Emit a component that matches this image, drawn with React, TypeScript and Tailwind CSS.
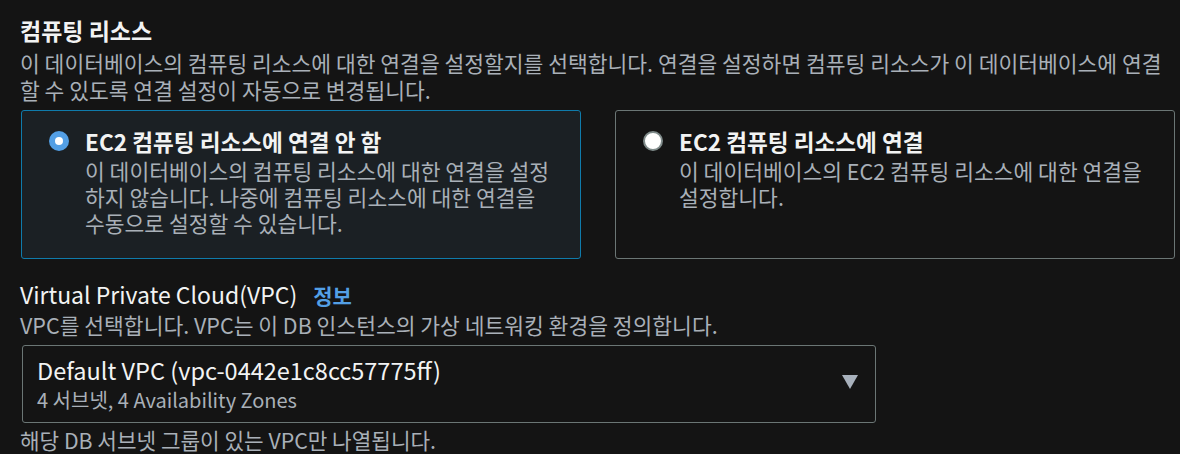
export default function App() {
  return (
    <div className="w-[1180px] h-[454px] overflow-hidden bg-[#141414] pl-[20px] pr-[6px] pt-[15px] font-['Noto_Sans_CJK_KR',sans-serif] text-[#f2f3f3]">
      {/* 컴퓨팅 리소스 */}
      <h2 className="text-[23px] leading-[30px] font-bold">컴퓨팅 리소스</h2>
      <p className="mt-[4px] text-[21.5px] leading-[27px] text-[#a9b0b8]">
        이 데이터베이스의 컴퓨팅 리소스에 대한 연결을 설정할지를 선택합니다. 연결을 설정하면 컴퓨팅 리소스가 이 데이터베이스에 연결할 수 있도록 연결 설정이 자동으로 변경됩니다.
      </p>

      <div className="mt-[7px] grid grid-cols-[560px_560px] gap-[34px] pl-[1px]">
        <div className="flex items-start rounded-[3px] border border-[#0f7bab] bg-[#1b2024] pl-[27px] pr-[24px] pt-[16px] pb-[22px]">
          <span className="mt-[4px] flex h-[20px] w-[20px] shrink-0 items-center justify-center rounded-full bg-[#539fe5]">
            <span className="h-[8px] w-[8px] rounded-full bg-white" />
          </span>
          <div className="ml-[16px]">
            <div className="text-[22.6px] leading-[30px] font-bold">EC2 컴퓨팅 리소스에 연결 안 함</div>
            <p className="mt-[1px] text-[21.5px] leading-[26px] text-[#a9b0b8]">
              이 데이터베이스의 컴퓨팅 리소스에 대한 연결을 설정하지 않습니다. 나중에 컴퓨팅 리소스에 대한 연결을 수동으로 설정할 수 있습니다.
            </p>
          </div>
        </div>

        <div className="flex items-start rounded-[3px] border border-[#6b7675] bg-[#141414] pl-[27px] pr-[24px] pt-[16px] pb-[22px]">
          <span className="mt-[4px] h-[20px] w-[20px] shrink-0 rounded-full border-2 border-[#7f8b8a] bg-white" />
          <div className="ml-[16px]">
            <div className="text-[22.6px] leading-[30px] font-bold">EC2 컴퓨팅 리소스에 연결</div>
            <p className="mt-[1px] text-[21.5px] leading-[26px] text-[#a9b0b8]">
              이 데이터베이스의 EC2 컴퓨팅 리소스에 대한 연결을 설정합니다.
            </p>
          </div>
        </div>
      </div>

      {/* VPC */}
      <div className="mt-[20px] flex items-baseline gap-[16px]">
        <span className="text-[23px] leading-[30px]">Virtual Private Cloud(VPC)</span>
        <span className="text-[21px] leading-[30px] font-bold text-[#539fe5]">정보</span>
      </div>
      <p className="mt-[1px] text-[21.5px] leading-[27px] text-[#a9b0b8]">
        VPC를 선택합니다. VPC는 이 DB 인스턴스의 가상 네트워킹 환경을 정의합니다.
      </p>

      <div className="mt-[7px] ml-[2px] flex h-[78px] w-[854px] items-center rounded-[3px] border border-[#6b7675] pl-[14px] pr-[17px]">
        <div className="flex-1">
          <div className="text-[23.5px] leading-[30px]">Default VPC (vpc-0442e1c8cc57775ff)</div>
          <div className="mt-[2px] text-[20px] leading-[26px] text-[#a9b0b8]">4 서브넷, 4 Availability Zones</div>
        </div>
        <svg width="16" height="14" viewBox="0 0 16 14" className="mb-[4px]">
          <path d="M0 0 H16 L8 14 Z" fill="#a8b1bc" />
        </svg>
      </div>

      <p className="mt-[3px] text-[21.3px] leading-[27px] text-[#a9b0b8]">해당 DB 서브넷 그룹이 있는 VPC만 나열됩니다.</p>
    </div>
  );
}
